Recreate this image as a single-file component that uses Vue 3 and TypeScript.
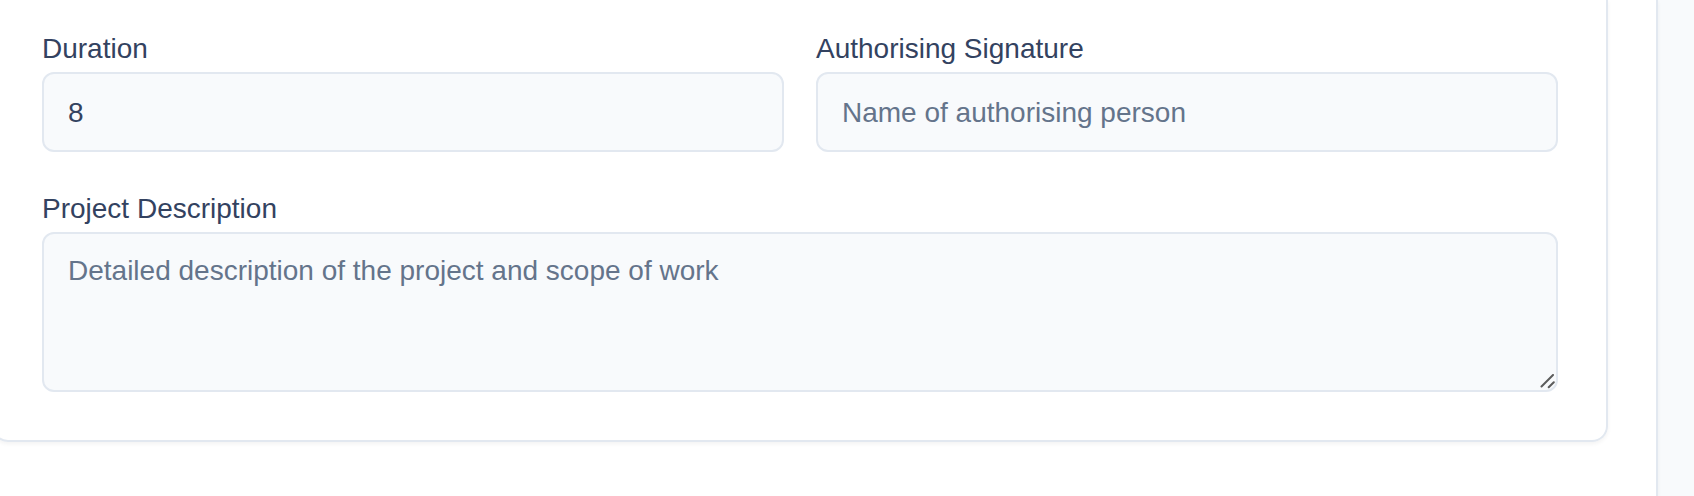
<script setup lang="ts">
import { ref } from 'vue'

const duration = ref('8')
const signature = ref('')
const description = ref('')
</script>

<template>
  <div class="page">
    <main class="panel">
      <form class="card" @submit.prevent>
        <div class="field">
          <label for="duration">Duration</label>
          <input id="duration" v-model="duration" type="text" />
        </div>
        <div class="field">
          <label for="signature">Authorising Signature</label>
          <input id="signature" v-model="signature" type="text" placeholder="Name of authorising person" />
        </div>
        <div class="field wide">
          <label for="description">Project Description</label>
          <div class="area">
            <textarea
              id="description"
              v-model="description"
              placeholder="Detailed description of the project and scope of work"
            ></textarea>
            <svg class="grip" viewBox="0 0 16 16" aria-hidden="true">
              <path d="M1.5 12.5 13 1M8.7 13.3 13.8 8.2" />
            </svg>
          </div>
        </div>
      </form>
    </main>
  </div>
</template>

<style>
body {
  margin: 0;
  background: #f8fafc;
}
</style>

<style scoped>
.page {
  min-height: 100vh;
  display: flex;
  overflow: hidden;
  font-family: "Liberation Sans", Arial, sans-serif;
  font-size: 28px;
  line-height: 40px;
  color: #334260;
}

.panel {
  box-sizing: border-box;
  flex: 1;
  min-width: 0;
  margin-left: -58px;
  margin-right: 36px;
  padding: 0 48px 48px;
  border: solid #e2e8f0;
  border-width: 0 2px;
  background: #fff;
  box-shadow: 0 2px 4px rgba(0, 0, 0, 0.05);
}

.card {
  display: grid;
  grid-template-columns: 1fr 1fr;
  gap: 37px 32px;
  padding: 29px 48px 48px;
  border: 2px solid #e2e8f0;
  border-top: 0;
  border-radius: 0 0 16px 16px;
  box-shadow: 0 2px 4px rgba(0, 0, 0, 0.05);
}

.field {
  display: flex;
  flex-direction: column;
  gap: 3px;
  min-width: 0;
}

.wide {
  grid-column: 1 / -1;
}

input,
textarea {
  box-sizing: border-box;
  display: block;
  width: 100%;
  margin: 0;
  border: 2px solid #e2e8f0;
  border-radius: 12px;
  background: #f8fafc;
  color: inherit;
  font: inherit;
  outline: none;
}

input {
  height: 80px;
  padding: 2px 24px 0;
}

textarea {
  height: 160px;
  padding: 17px 24px;
  resize: none;
}

input:focus,
textarea:focus {
  border-color: #94a3b8;
}

::placeholder {
  color: #64748b;
  opacity: 1;
}

.area {
  position: relative;
}

.grip {
  position: absolute;
  right: 2px;
  bottom: 2px;
  width: 16px;
  height: 16px;
  fill: none;
  stroke: #5c5c5c;
  stroke-width: 2;
  stroke-linecap: round;
  pointer-events: none;
}
</style>
